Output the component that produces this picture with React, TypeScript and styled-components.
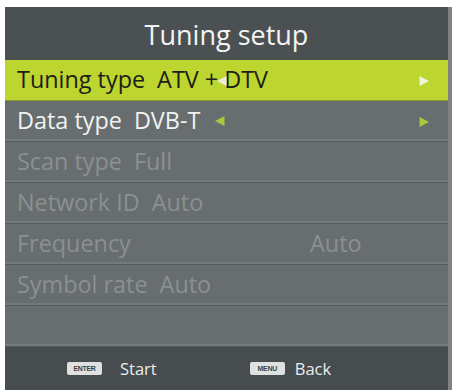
import React from 'react';
import styled, {createGlobalStyle} from 'styled-components';

const Global = createGlobalStyle`
  body {
    margin: 0;
    background: #ffffff;
    font-family: "Open Sans", "Noto Sans", sans-serif;
  }
`

type RowType = {
    label: string
    value: string
    state: 'active' | 'normal' | 'disabled'
    labelWidth?: number
    arrows?: boolean
}

const rows: RowType[] = [
    {label: 'Tuning type', value: 'ATV + DTV', state: 'active', arrows: true},
    {label: 'Data type', value: 'DVB-T', state: 'normal', arrows: true},
    {label: 'Scan type', value: 'Full', state: 'disabled'},
    {label: 'Network ID', value: 'Auto', state: 'disabled'},
    {label: 'Frequency', value: 'Auto', state: 'disabled', labelWidth: 293},
    {label: 'Symbol rate', value: 'Auto', state: 'disabled'},
]

const Arrow = ({dir, color}: { dir: 'left' | 'right', color: string }) => (
    <svg width="12" height="12" viewBox="0 0 12 12">
        {dir === 'right'
            ? <polygon points="1.5,1 11,6 1.5,11" fill={color}/>
            : <polygon points="10.5,1 1,6 10.5,11" fill={color}/>}
    </svg>
)

export default function App() {
    return (
        <>
            <Global/>
            <Screen>
                <Title>Tuning setup</Title>
                {rows.map((r) => (
                    <Row key={r.label} $state={r.state}>
                        <Label $width={r.labelWidth}>{r.label}</Label>
                        <Value>{r.value}</Value>
                        {r.arrows && r.state === 'normal' && (
                            <LeftArrow><Arrow dir="left" color="#a9c93c"/></LeftArrow>
                        )}
                        {r.arrows && r.state === 'active' && (
                            <OverArrow><Arrow dir="left" color="#e9efd6"/></OverArrow>
                        )}
                        {r.arrows && (
                            <RightArrow>
                                <Arrow dir="right" color={r.state === 'active' ? '#eef3dc' : '#a9c93c'}/>
                            </RightArrow>
                        )}
                    </Row>
                ))}
                <Row $state="empty"/>
                <Footer>
                    <Hint $gap={18}>
                        <Key>ENTER</Key>
                        <span>Start</span>
                    </Hint>
                    <Hint $gap={10}>
                        <Key>MENU</Key>
                        <span>Back</span>
                    </Hint>
                </Footer>
            </Screen>
        </>
    );
}

const Screen = styled.div`
  margin: 7px 0 0 5px;
  width: 443px;
  height: 383px;
  background-color: #686d6f;
  border-right: 4px solid #7d8283;
  display: flex;
  flex-direction: column;
`
const Title = styled.div`
  height: 53px;
  flex-shrink: 0;
  background-color: #4b5052;
  color: #f3f4f3;
  font-size: 27px;
  display: flex;
  align-items: center;
  justify-content: center;
  padding-top: 2px;
  box-sizing: border-box;
`
const Row = styled.div<{ $state: 'active' | 'normal' | 'disabled' | 'empty' }>`
  position: relative;
  height: 41px;
  flex-shrink: 0;
  box-sizing: border-box;
  display: flex;
  align-items: center;
  padding: 0 12px 3px;
  font-size: 23.4px;
  background-color: ${p => p.$state === 'active' ? '#bcd52f' : '#686d6f'};
  color: ${p => p.$state === 'active' ? '#1d2018' : p.$state === 'normal' ? '#f1f2f1' : '#8b9092'};
  border-bottom: ${p => p.$state === 'active' ? '1px solid #8a9a2a' : '1px solid #565b5d'};
  box-shadow: ${p => p.$state === 'active' ? 'none' : 'inset 0 -2px 0 #74797b'};
`
const Label = styled.span<{ $width?: number }>`
  ${p => p.$width ? `width: ${p.$width}px;` : 'margin-right: 12px;'}
  flex-shrink: 0;
`
const Value = styled.span`
  white-space: nowrap;
`
const LeftArrow = styled.span`
  display: flex;
  margin-left: 14px;
  margin-top: 3px;
`
const OverArrow = styled.span`
  position: absolute;
  left: 211px;
  top: 15px;
  display: flex;
`
const RightArrow = styled.span`
  position: absolute;
  right: 18px;
  top: 15px;
  display: flex;
`
const Footer = styled.div`
  flex: 1;
  background-color: #474c4e;
  display: flex;
  align-items: center;
  padding: 0 0 0 62px;
  gap: 93px;
  color: #eceeed;
  font-size: 16.5px;
`
const Hint = styled.div<{ $gap: number }>`
  display: flex;
  align-items: center;
  gap: ${p => p.$gap}px;
`
const Key = styled.span`
  width: 35px;
  height: 13px;
  border-radius: 2px;
  background-color: #dfe1e0;
  color: #3c4143;
  font-size: 7px;
  font-weight: 700;
  letter-spacing: -0.3px;
  display: flex;
  align-items: center;
  justify-content: center;
  font-family: "Liberation Sans", sans-serif;
`
